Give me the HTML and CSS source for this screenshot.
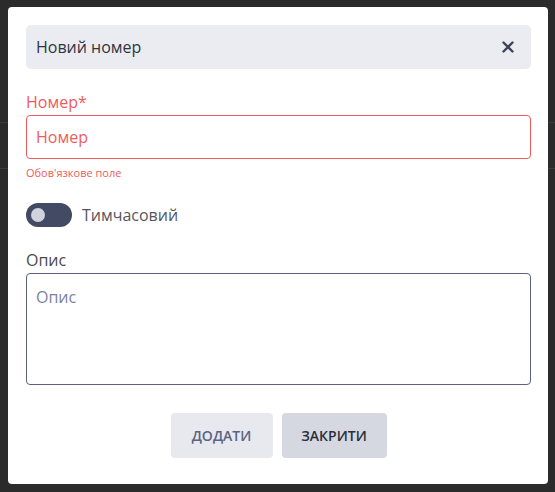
FILE: index.html
```html
<!DOCTYPE html>
<html lang="uk">
<head>
<meta charset="utf-8">
<title>Новий номер</title>
<link rel="stylesheet" href="styles.css">
</head>
<body>
<div class="modal">
  <div class="modal-header">
    <span class="modal-title">Новий номер</span>
    <button class="close-btn" aria-label="Закрити">
      <svg width="12" height="12" viewBox="0 0 12 12"><path d="M1.5 1.5 L10.5 10.5 M10.5 1.5 L1.5 10.5" stroke="#3c4359" stroke-width="2.4" stroke-linecap="round"/></svg>
    </button>
  </div>

  <label class="field-label error-label">Номер*</label>
  <div class="input error-input"><span class="placeholder error-ph">Номер</span></div>
  <div class="error-text">Обов'язкове поле</div>

  <div class="toggle-row">
    <span class="toggle"><span class="knob"></span></span>
    <span class="toggle-label">Тимчасовий</span>
  </div>

  <label class="field-label desc-label">Опис</label>
  <div class="textarea"><span class="placeholder">Опис</span></div>

  <div class="actions">
    <button class="btn btn-add">ДОДАТИ</button>
    <button class="btn btn-close">ЗАКРИТИ</button>
  </div>
</div>
</body>
</html>
```

FILE: styles.css
```css
* { box-sizing: border-box; }
html, body { height: 100%; }
body {
  margin: 0;
  padding: 7px 7px 0 8px;
  background-color: #2b2b2b;
  background-image:
    linear-gradient(#3b3b3b, #3b3b3b),
    linear-gradient(#3b3b3b, #3b3b3b);
  background-size: 100% 1px, 100% 1px;
  background-position: 0 122px, 0 168px;
  background-repeat: no-repeat;
  font-family: "Open Sans", "Liberation Sans", sans-serif;
}
.modal {
  width: 540px;
  height: 477px;
  background: #fff;
  border-radius: 4px;
  padding: 18px 17px 26px 18px;
  display: flex;
  flex-direction: column;
}
.modal-header {
  height: 44px;
  background: #ebecf1;
  border-radius: 5px;
  display: flex;
  align-items: center;
  justify-content: space-between;
  padding: 0 17px 0 10px;
}
.modal-title {
  font-size: 16px;
  color: #30343f;
}
.close-btn {
  border: 0;
  background: none;
  padding: 0;
  width: 12px;
  height: 12px;
  display: flex;
}
.field-label {
  display: block;
  font-size: 16px;
  line-height: 20px;
  color: #4a4a4a;
}
.error-label { color: #ef5b5b; margin-top: 23px; }
.input {
  margin-top: 3px;
  height: 44px;
  border: 1px solid #5a6280;
  border-radius: 4px;
  display: flex;
  align-items: center;
  padding: 0 9px;
}
.error-input { border-color: #ef5b5b; }
.placeholder {
  font-size: 16px;
  color: #7a82a0;
}
.error-ph { color: #ef5b5b; }
.error-text {
  margin-top: 7px;
  font-size: 11px;
  line-height: 14px;
  color: #ef5b5b;
}
.toggle-row {
  margin-top: 23px;
  display: flex;
  align-items: center;
  gap: 10px;
  height: 24px;
}
.toggle {
  width: 46px;
  height: 24px;
  border-radius: 12px;
  background: #434a63;
  display: flex;
  align-items: center;
  padding-left: 5px;
}
.knob {
  width: 14px;
  height: 14px;
  border-radius: 50%;
  background: #cfd3de;
}
.toggle-label {
  font-size: 16px;
  color: #55575d;
}
.desc-label { margin-top: 23px; }
.textarea {
  margin-top: 3px;
  height: 112px;
  border: 1px solid #5a6280;
  border-radius: 4px;
  padding: 12px 9px;
}
.actions {
  margin-top: 28px;
  display: flex;
  justify-content: center;
  gap: 9px;
}
.btn {
  height: 45px;
  border: 0;
  border-radius: 4px;
  font-family: inherit;
  font-size: 14px;
  font-weight: 600;
  padding: 0 19px;
}
.btn-add { background: #e8e9ef; color: #5a6484; width: 102px; }
.btn-close { background: #d5d8e1; color: #2a2e3a; width: 105px; }
```
